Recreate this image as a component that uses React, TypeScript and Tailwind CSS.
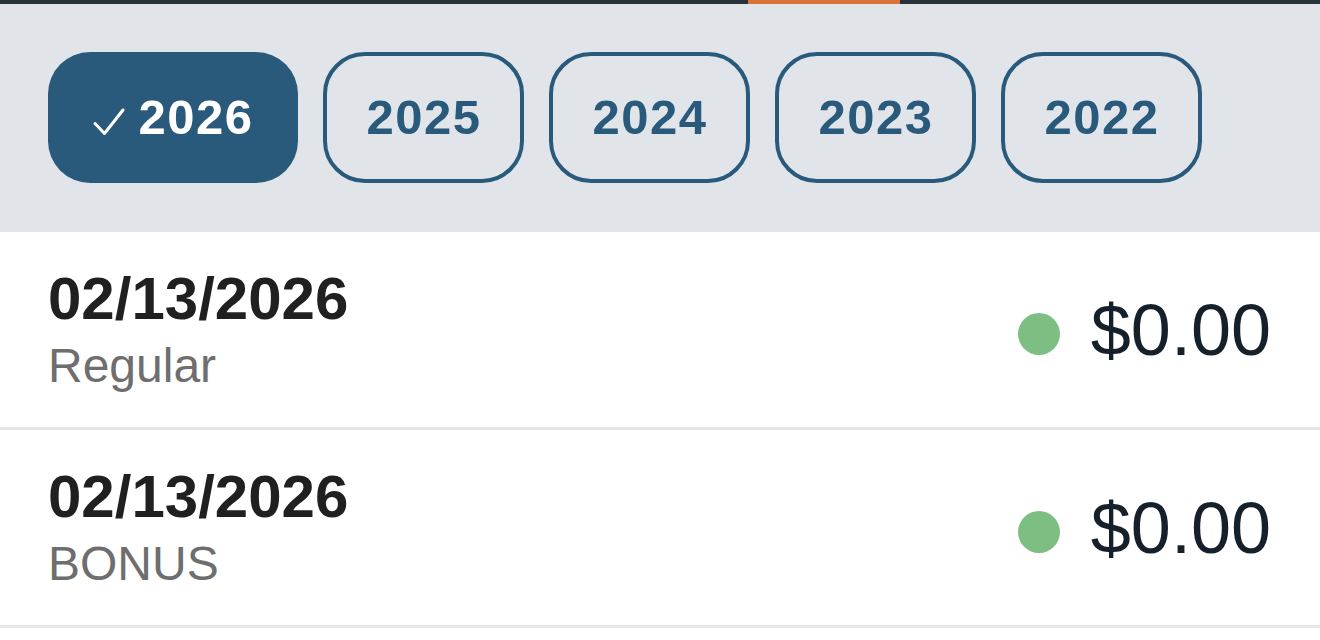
import React from "react";

const years = ["2026", "2025", "2024", "2023", "2022"];

const rows = [
  { date: "02/13/2026", type: "Regular", amount: "$0.00" },
  { date: "02/13/2026", type: "BONUS", amount: "$0.00" },
];

function Check() {
  return (
    <svg width="32" height="28" viewBox="0 0 32 28" className="mt-[8px] shrink-0" fill="none">
      <path d="M2 15.5 L11.5 25.5 L30 2" stroke="white" strokeWidth="3" strokeLinecap="round" strokeLinejoin="round" />
    </svg>
  );
}

export default function App() {
  return (
    <div className="w-[1320px] h-[640px] bg-white overflow-hidden" style={{ fontFamily: '"Liberation Sans", Arial, sans-serif' }}>
      <div className="flex h-[4px] bg-[#283038]">
        <div className="w-[748px]" />
        <div className="w-[152px] bg-[#d9733a]" />
      </div>
      <div className="bg-[#e1e5ea] h-[228px] pt-[48px] pl-[48px] flex gap-[25px] items-start">
        {years.map((y, i) =>
          i === 0 ? (
            <div
              key={y}
              className="w-[250px] h-[131px] rounded-[42px] bg-[#2a5a7b] flex items-center justify-center gap-[14px] text-white"
            >
              <Check />
              <span className="text-[49px] leading-[49px] font-bold tracking-[0.03em]">{y}</span>
            </div>
          ) : (
            <div
              key={y}
              className="w-[201px] h-[131px] rounded-[42px] border-[4px] border-[#2a5a7b] flex items-center justify-center text-[#2a5a7b]"
            >
              <span className="text-[49px] leading-[49px] font-bold tracking-[0.03em] pl-[1px]">{y}</span>
            </div>
          )
        )}
      </div>
      {rows.map((r, i) => (
        <div key={i} className="h-[198px] border-b-[3px] border-[#e7e7e7] flex items-center justify-between pl-[48px] pr-[49px]">
          <div className="flex flex-col">
            <div className="text-[60px] leading-[60px] font-bold text-[#202020]">{r.date}</div>
            <div className="mt-[13px] text-[48px] leading-[48px] text-[#6e6e6e]">{r.type}</div>
          </div>
          <div className="flex items-center">
            <div className="w-[42px] h-[42px] rounded-full bg-[#7dbf82] mt-[8px] mr-[31px]" />
            <div className="text-[72px] leading-[72px] text-[#16202b]">{r.amount}</div>
          </div>
        </div>
      ))}
    </div>
  );
}
